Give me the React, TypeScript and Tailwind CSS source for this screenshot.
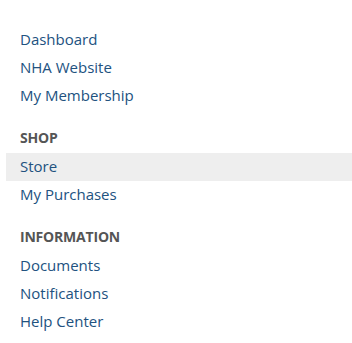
import React from "react";

const groups: { title?: string; items: { label: string; active?: boolean }[] }[] = [
  { items: [{ label: "Dashboard" }, { label: "NHA Website" }, { label: "My Membership" }] },
  { title: "SHOP", items: [{ label: "Store", active: true }, { label: "My Purchases" }] },
  { title: "INFORMATION", items: [{ label: "Documents" }, { label: "Notifications" }, { label: "Help Center" }] },
];

export default function App() {
  return (
    <div className="w-[352px] h-[343px] bg-white pt-[26px] pl-[6px]" style={{ fontFamily: '"Open Sans", sans-serif' }}>
      {groups.map((g, gi) => (
        <div key={gi}>
          {g.title && (
            <div className="mt-[14px] h-[29px] flex items-center pl-[14px] pb-[2px] text-[14px] font-bold text-[#555555] tracking-[-0.2px]">
              {g.title}
            </div>
          )}
          {g.items.map((it) => (
            <div
              key={it.label}
              className={`h-[28px] flex items-center pl-[14px] pb-[2px] text-[15px] text-[#22527f] ${it.active ? "bg-[#eeeeee]" : ""}`}
            >
              {it.label}
            </div>
          ))}
        </div>
      ))}
    </div>
  );
}
